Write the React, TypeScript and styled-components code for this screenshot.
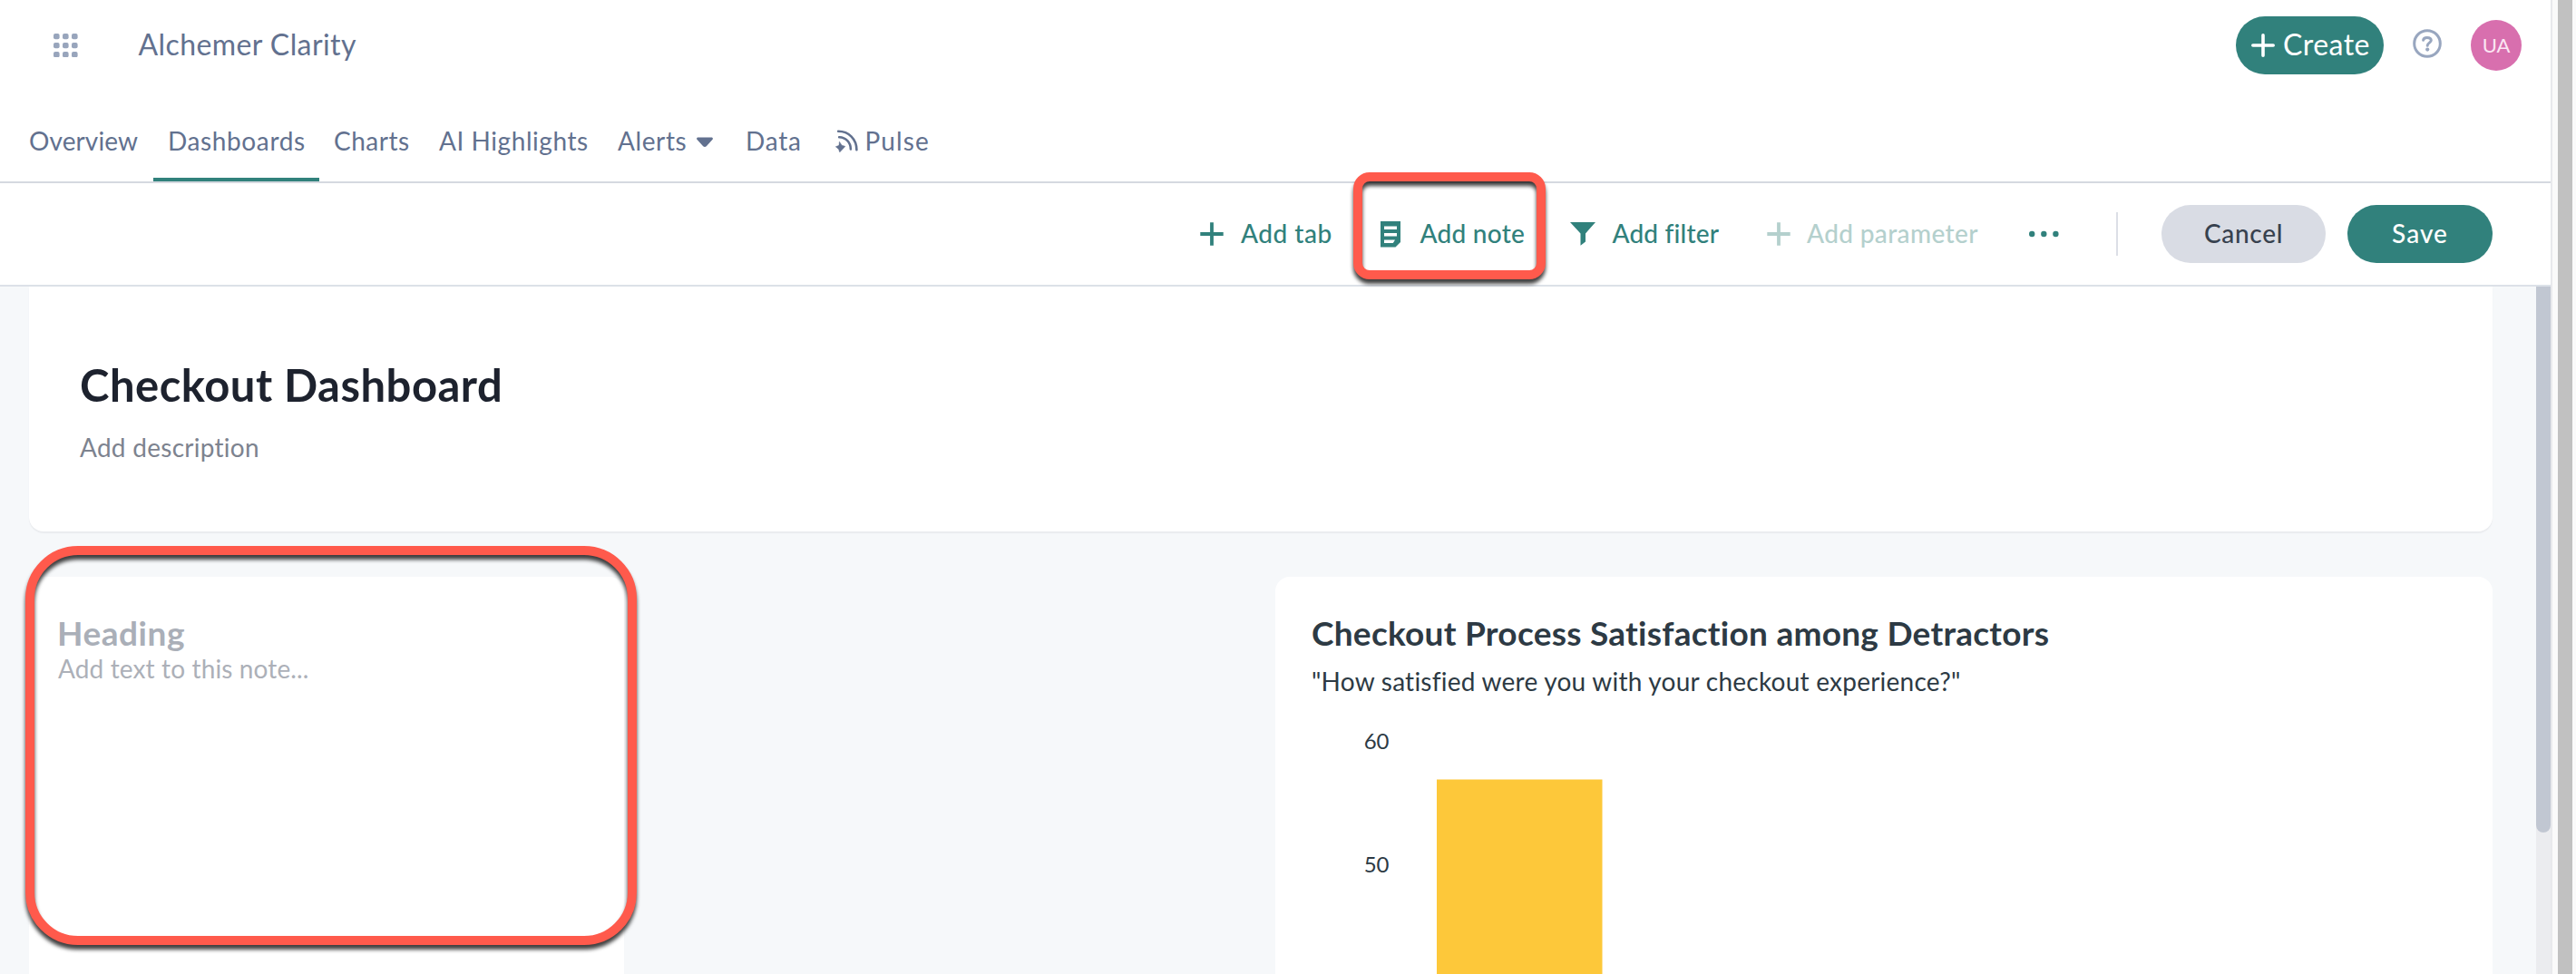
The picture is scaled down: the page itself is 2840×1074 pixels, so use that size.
import React from "react";
import styled, { createGlobalStyle } from "styled-components";

const teal = "#31817c";
const slate = "#62718f";

const GlobalStyle = createGlobalStyle`
  *, *::before, *::after { box-sizing: border-box; }
  body {
    margin: 0;
    background: #fff;
    font-family: Lato, "Open Sans", "Noto Sans", sans-serif;
    -webkit-font-smoothing: antialiased;
  }
  svg { display: block; flex: none; }
`;

const Window = styled.div`
  display: flex;
  width: 2840px;
  height: 1074px;
  overflow: hidden;
  position: relative;
`;

const AppColumn = styled.div`
  width: 2812px;
  flex: none;
  display: flex;
  flex-direction: column;
  background: #fff;
`;

const Strip = styled.div<{ $width: number; $color: string }>`
  width: ${(p) => p.$width}px;
  flex: none;
  background: ${(p) => p.$color};
`;

const Label = styled.span<{
  $size?: number;
  $weight?: number;
  $spacing?: number;
  $lift?: number;
}>`
  font-size: ${(p) => p.$size ?? 28}px;
  font-weight: ${(p) => p.$weight ?? 400};
  letter-spacing: ${(p) => p.$spacing ?? 0}px;
  line-height: 40px;
  padding-bottom: ${(p) => (p.$lift ?? 0) * 2}px;
  white-space: nowrap;
`;

/* Header */

const Header = styled.header`
  height: 100px;
  flex: none;
  display: flex;
  align-items: center;
  padding: 0 32px 0 59px;
  color: ${slate};
`;

const Product = styled.div`
  margin-left: 66.5px;
  flex: 1;
  display: flex;
`;

const CreateButton = styled.button`
  width: 163px;
  height: 64px;
  border: 0;
  border-radius: 32px;
  background: ${teal};
  color: #fff;
  font-family: inherit;
  display: flex;
  align-items: center;
  gap: 9px;
  padding: 0 0 0 17px;
`;

const HelpLink = styled.a`
  display: flex;
  margin: -4px 32px 0;
  color: #98a6bf;
`;

const Avatar = styled.div`
  width: 56px;
  height: 56px;
  border-radius: 50%;
  background: #d86fae;
  color: #fbe6f3;
  display: flex;
  align-items: center;
  justify-content: center;
`;

/* Navigation tabs */

const Nav = styled.nav`
  height: 102px;
  flex: none;
  display: flex;
  padding-left: 16px;
  border-bottom: 2px solid #d5d9e0;
`;

const Tab = styled.a<{ $width: number; $active?: boolean; $gap?: number }>`
  width: ${(p) => p.$width}px;
  height: 100px;
  display: flex;
  align-items: flex-start;
  gap: ${(p) => p.$gap ?? 0}px;
  padding: 35px 0 0 16px;
  border-bottom: 4px solid ${(p) => (p.$active ? teal : "transparent")};
  color: ${slate};
`;

const TabIcon = styled.span<{ $top: number }>`
  display: flex;
  padding-top: ${(p) => p.$top}px;
`;

/* Toolbar */

const Toolbar = styled.div`
  height: 114px;
  flex: none;
  display: flex;
  align-items: center;
  justify-content: flex-end;
  padding-right: 64px;
  border-bottom: 2px solid #dce1e8;
`;

const Action = styled.div<{ $width: number; $disabled?: boolean }>`
  width: ${(p) => p.$width}px;
  display: flex;
  align-items: center;
  color: ${(p) => (p.$disabled ? "#b4d0cd" : teal)};
`;

const ActionIcon = styled.span<{ $slot: number }>`
  width: ${(p) => p.$slot}px;
  display: flex;
`;

const Divider = styled.div`
  width: 2px;
  height: 48px;
  background: #dcdfe6;
  margin-right: 48px;
`;

const PillButton = styled.button<{ $width: number; $primary?: boolean }>`
  width: ${(p) => p.$width}px;
  height: 64px;
  border: 0;
  border-radius: 32px;
  margin-left: ${(p) => (p.$primary ? 24 : 0)}px;
  padding: 0;
  background: ${(p) => (p.$primary ? teal : "#d9dce4")};
  color: ${(p) => (p.$primary ? "#fff" : "#37414e")};
  font-family: inherit;
  display: flex;
  align-items: center;
  justify-content: center;
`;

/* Dashboard body */

const Body = styled.main`
  flex: 1;
  min-height: 0;
  display: flex;
  overflow: hidden;
  background: #f6f8fa;
`;

const Canvas = styled.div`
  flex: 1;
  display: flex;
  flex-direction: column;
  padding: 0 48px 0 32px;
`;

const TitleCard = styled.section`
  height: 270px;
  flex: none;
  display: flex;
  flex-direction: column;
  padding: 78px 56px 0;
  background: #fff;
  border-radius: 0 0 16px 16px;
  box-shadow: 0 2px 1px #eaecef;
`;

const DashboardTitle = styled.h1`
  margin: 0;
  font-size: 49px;
  font-weight: 700;
  line-height: 60px;
  letter-spacing: 0.48px;
  color: #1d222e;
  white-space: nowrap;
`;

const Description = styled.p`
  margin: 19px 0 0;
  font-size: 28px;
  line-height: 40px;
  letter-spacing: 0.27px;
  color: #7d838f;
`;

const CardRow = styled.div`
  display: flex;
  justify-content: space-between;
  margin-top: 50px;
  flex: 1;
`;

const Card = styled.section<{ $width: number; $pad: number }>`
  width: ${(p) => p.$width}px;
  padding: 42px 0 0 ${(p) => p.$pad}px;
  background: #fff;
  border-radius: 16px 16px 0 0;
`;

const CardTitle = styled.h2<{ $color: string; $spacing: number; $indent?: number }>`
  margin: 0 0 0 ${(p) => p.$indent ?? 0}px;
  font-size: 37px;
  font-weight: 700;
  line-height: 39px;
  letter-spacing: ${(p) => p.$spacing}px;
  color: ${(p) => p.$color};
  white-space: nowrap;
`;

const CardText = styled.p<{ $color: string; $spacing: number; $top?: number }>`
  margin: ${(p) => p.$top ?? 0}px 0 0;
  font-size: 28px;
  line-height: 40px;
  letter-spacing: ${(p) => p.$spacing}px;
  color: ${(p) => p.$color};
  white-space: nowrap;
`;

const ChartArea = styled.div`
  height: 304px;
  margin-top: -1px;
`;

const AxisLabel = styled.text`
  font-family: Lato, "Open Sans", sans-serif;
  font-size: 24px;
  fill: #2d3a44;
`;

const ScrollTrack = styled.div`
  width: 16px;
  background: #ebecef;
`;

const ScrollThumb = styled.div`
  height: 602px;
  background: #c1c7d2;
  border-radius: 0 0 8px 8px;
`;

const Highlight = styled.div<{
  $x: number;
  $y: number;
  $w: number;
  $h: number;
  $radius: number;
}>`
  position: absolute;
  left: ${(p) => p.$x}px;
  top: ${(p) => p.$y}px;
  width: ${(p) => p.$w}px;
  height: ${(p) => p.$h}px;
  border: 10px solid #ff5a4c;
  border-radius: ${(p) => p.$radius}px;
  filter: drop-shadow(0 5px 2px rgba(0, 0, 0, 0.75));
  pointer-events: none;
`;

const AppsIcon = () => (
  <svg width="27" height="26" viewBox="0 0 27 26" fill="#98a5bc">
    {[0, 10, 20].map((y) =>
      [0, 10, 20].map((x) => <rect key={`${x}-${y}`} x={x} y={y} width="6.6" height="6.2" rx="2" />)
    )}
  </svg>
);

const PlusIcon = () => (
  <svg width="26" height="26" viewBox="0 0 26 26" stroke="currentColor" strokeWidth="3.8">
    <path d="M0.3 13H25.7M13 0.3V25.7" />
  </svg>
);

const RoundPlusIcon = () => (
  <svg width="26" height="26" viewBox="0 0 26 26" stroke="currentColor" strokeWidth="3.6" strokeLinecap="round">
    <path d="M1.8 13H24.2M13 1.8V24.2" />
  </svg>
);

const HelpIcon = () => (
  <svg width="32" height="32" viewBox="0 0 32 32" fill="none" stroke="currentColor" strokeWidth="3">
    <circle cx="16" cy="16" r="14.3" />
    <path d="M11.6 12.3C11.9 10.2 13.3 9.4 15.8 9.4C18.6 9.4 20.3 10.5 20.3 12.6C20.3 14.9 16.2 15.4 16.2 18.2" strokeLinecap="round" />
    <circle cx="16.2" cy="22.6" r="2.1" fill="currentColor" stroke="none" />
  </svg>
);

const CaretIcon = () => (
  <svg width="18" height="12" viewBox="0 0 18 12" fill={slate}>
    <path d="M1.6 0.5H16.4C17.8 0.5 18.4 2 17.4 3L10.8 10.2C9.8 11.2 8.2 11.2 7.2 10.2L0.6 3C-0.4 2 0.2 0.5 1.6 0.5Z" />
  </svg>
);

const PulseIcon = () => (
  <svg width="25" height="26" viewBox="0 0 25 26" fill="none" stroke={slate} strokeWidth="2.6" strokeLinecap="round">
    <path d="M3.2 1.8C14.8 1.8 23.4 10.6 23.4 22.2" />
    <path d="M4.2 8.2C11.6 8.4 16.8 14.2 16.9 21.4" />
    <path
      d="M4.6 13.6L7 17.2L10.8 18.4L8.2 21.2L4.8 24.8L3.6 21.4L0.4 18.8L3.8 17.4Z"
      fill={slate}
      strokeWidth="0.6"
    />
  </svg>
);

const NoteIcon = () => (
  <svg width="22" height="29" viewBox="0 0 22 29">
    <path fill="currentColor" d="M0 0H22V23L16.5 28.6H0Z" />
    <path stroke="#fff" strokeWidth="3.6" d="M4 7.3H18M4 14.8H18M4 22.2H13.2" />
    <path fill="#fff" d="M13 20.4H16L13.8 24H13Z" />
  </svg>
);

const FilterIcon = () => (
  <svg width="28" height="26" viewBox="0 0 28 26" fill="currentColor">
    <path d="M0 0H28L17 12.4V21.6L11.5 25.8V12.4Z" />
  </svg>
);

const MoreIcon = () => (
  <svg width="33" height="8" viewBox="0 0 33 8" fill="currentColor">
    <circle cx="3.2" cy="4" r="3.2" />
    <circle cx="16.3" cy="4" r="3.2" />
    <circle cx="29.4" cy="4" r="3.2" />
  </svg>
);

const BarChart = () => (
  <svg width="1290" height="304" viewBox="0 0 1290 304">
    <AxisLabel x="85.5" y="56" textAnchor="end">60</AxisLabel>
    <AxisLabel x="85.5" y="192" textAnchor="end">50</AxisLabel>
    <rect x="138" y="89.5" width="182.5" height="215" fill="#fdc83a" />
  </svg>
);

export default function App() {
  return (
    <Window>
      <GlobalStyle />
      <AppColumn>
        <Header>
          <AppsIcon />
          <Product>
            <Label $size={32} $spacing={0.42} $lift={1}>Alchemer Clarity</Label>
          </Product>
          <CreateButton>
            <RoundPlusIcon />
            <Label $size={32} $spacing={0.45} $lift={1}>Create</Label>
          </CreateButton>
          <HelpLink>
            <HelpIcon />
          </HelpLink>
          <Avatar>
            <Label $size={22}>UA</Label>
          </Avatar>
        </Header>

        <Nav>
          <Tab $width={153}><Label $spacing={0.11}>Overview</Label></Tab>
          <Tab $width={183} $active><Label $spacing={0.62}>Dashboards</Label></Tab>
          <Tab $width={116}><Label $spacing={0.51}>Charts</Label></Tab>
          <Tab $width={197}><Label $spacing={0.55}>AI Highlights</Label></Tab>
          <Tab $width={141} $gap={11}>
            <Label $spacing={0.6}>Alerts</Label>
            <TabIcon $top={16}><CaretIcon /></TabIcon>
          </Tab>
          <Tab $width={99}><Label $spacing={0.77}>Data</Label></Tab>
          <Tab $width={140} $gap={7.5}>
            <TabIcon $top={8}><PulseIcon /></TabIcon>
            <Label $spacing={1.1}>Pulse</Label>
          </Tab>
        </Nav>

        <Toolbar>
          <Action $width={199}>
            <ActionIcon $slot={45}><PlusIcon /></ActionIcon>
            <Label $weight={500} $spacing={0.51} $lift={1}>Add tab</Label>
          </Action>
          <Action $width={209}>
            <ActionIcon $slot={43.5}><NoteIcon /></ActionIcon>
            <Label $weight={500} $spacing={0.26} $lift={1}>Add note</Label>
          </Action>
          <Action $width={216.5}>
            <ActionIcon $slot={46.5}><FilterIcon /></ActionIcon>
            <Label $weight={500} $spacing={0.18} $lift={1}>Add filter</Label>
          </Action>
          <Action $width={289.5} $disabled>
            <ActionIcon $slot={44.5}><PlusIcon /></ActionIcon>
            <Label $weight={500} $spacing={0.36} $lift={1}>Add parameter</Label>
          </Action>
          <Action $width={96}><MoreIcon /></Action>
          <Divider />
          <PillButton $width={181}>
            <Label $weight={500} $spacing={0.68} $lift={1}>Cancel</Label>
          </PillButton>
          <PillButton $width={160} $primary>
            <Label $weight={500} $spacing={1.05} $lift={1}>Save</Label>
          </PillButton>
        </Toolbar>

        <Body>
          <Canvas>
            <TitleCard>
              <DashboardTitle>Checkout Dashboard</DashboardTitle>
              <Description>Add description</Description>
            </TitleCard>
            <CardRow>
              <Card $width={656} $pad={32}>
                <CardTitle $color="#aaafb8" $spacing={0.53} $indent={-1}>Heading</CardTitle>
                <CardText $color="#acb0b8" $spacing={0.13}>Add text to this note...</CardText>
              </Card>
              <Card $width={1342} $pad={40}>
                <CardTitle $color="#2d3a44" $spacing={0.26}>
                  Checkout Process Satisfaction among Detractors
                </CardTitle>
                <CardText $color="#2d3a44" $spacing={0.24} $top={14}>
                  "How satisfied were you with your checkout experience?"
                </CardText>
                <ChartArea>
                  <BarChart />
                </ChartArea>
              </Card>
            </CardRow>
          </Canvas>
          <ScrollTrack>
            <ScrollThumb />
          </ScrollTrack>
        </Body>
      </AppColumn>
      <Strip $width={2} $color="#e8e9ec" />
      <Strip $width={6} $color="#fafafa" />
      <Strip $width={16} $color="#c1c1c1" />
      <Strip $width={4} $color="#fafafa" />

      <Highlight $x={1492} $y={190} $w={212} $h={118} $radius={18} />
      <Highlight $x={28} $y={602} $w={674} $h={440} $radius={58} />
    </Window>
  );
}
